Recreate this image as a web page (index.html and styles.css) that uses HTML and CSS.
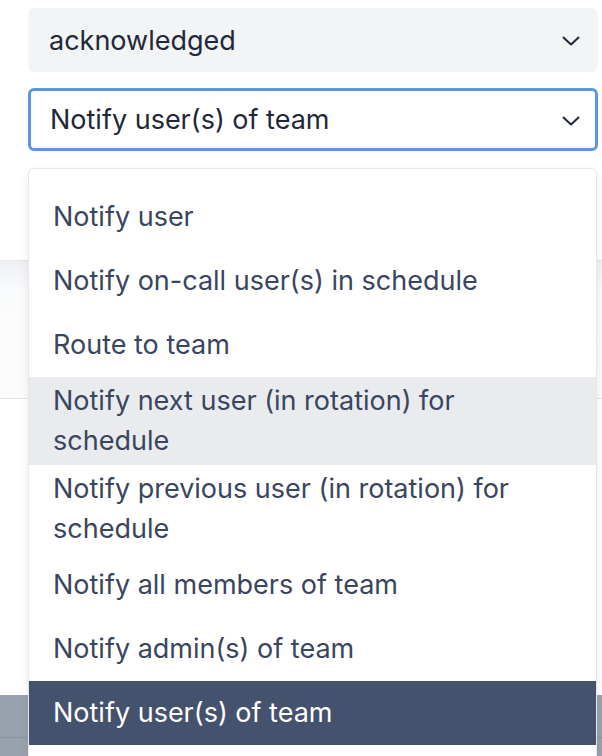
FILE: index.html
```html
<!DOCTYPE html>
<html lang="en">
<head>
  <meta charset="UTF-8">
  <meta name="viewport" content="width=device-width, initial-scale=1.0">
  <title>Escalation step</title>
  <link rel="stylesheet" href="styles.css">
</head>
<body>
  <!-- page behind the open menu -->
  <div class="page">
    <div class="page-top"></div>
    <div class="page-row"></div>
    <div class="page-body"></div>
    <div class="page-footer">
      <div class="footer-line"></div>
    </div>
  </div>

  <div class="form">
    <div class="select select-muted">
      <span>acknowledged</span>
      <svg class="chevron" width="18" height="10" viewBox="0 0 18 10"><path d="M1.5 1.5 L9 8.5 L16.5 1.5" fill="none" stroke="#1f2937" stroke-width="2" stroke-linecap="round" stroke-linejoin="round"/></svg>
    </div>
    <div class="select select-focus">
      <span>Notify user(s) of team</span>
      <svg class="chevron" width="18" height="10" viewBox="0 0 18 10"><path d="M1.5 1.5 L9 8.5 L16.5 1.5" fill="none" stroke="#1f2937" stroke-width="2" stroke-linecap="round" stroke-linejoin="round"/></svg>
    </div>

    <ul class="menu">
      <li class="option">Notify user</li>
      <li class="option">Notify on-call user(s) in schedule</li>
      <li class="option">Route to team</li>
      <li class="option option-hover">Notify next user (in rotation) for schedule</li>
      <li class="option">Notify previous user (in rotation) for schedule</li>
      <li class="option">Notify all members of team</li>
      <li class="option">Notify admin(s) of team</li>
      <li class="option option-selected">Notify user(s) of team</li>
    </ul>
  </div>
</body>
</html>
```

FILE: styles.css
```css
body {
  margin: 0;
  font-family: Inter, "Noto Sans", sans-serif;
  background: #fff;
  overflow: hidden;
  height: 756px;
}

.page {
  display: flex;
  flex-direction: column;
  height: 756px;
}

.page-top {
  height: 260px;
  background: #fff;
}

.page-row {
  height: 137px;
  border-top: 1px solid #e2e4e8;
  border-bottom: 1px solid #e2e4e8;
  background: linear-gradient(to bottom, #eef0f3, #fafbfc 30px, #fcfcfd);
}

.page-body {
  height: 296px;
  background: #fff;
}

.page-footer {
  flex: 1;
  background: #9aa1ae;
  padding-top: 42px;
}

.footer-line {
  height: 1px;
  background: #8c93a1;
}

.form {
  position: absolute;
  top: 8px;
  left: 28px;
  width: 570px;
  display: flex;
  flex-direction: column;
  gap: 16px;
}

.select {
  display: flex;
  align-items: center;
  justify-content: space-between;
  height: 64px;
  box-sizing: border-box;
  padding: 0 18px 0 21px;
  border-radius: 6px;
  font-size: 27px;
  color: #1f2937;
}

.select-muted {
  background: #f3f4f6;
}

.select-focus {
  background: #fff;
  border: 3px solid #5b95e6;
  padding-left: 19px;
  padding-right: 15px;
  height: 63px;
}

.chevron {
  margin-top: 2px;
}

.menu {
  list-style: none;
  margin: 1px 0 0;
  padding: 16px 0 0;
  box-sizing: border-box;
  width: 569px;
  height: 588px;
  overflow: hidden;
  background: #fff;
  border: 1px solid #e5e7eb;
  border-bottom: none;
  border-radius: 6px 6px 0 0;
  box-shadow: 0 4px 10px rgba(17, 24, 39, 0.08);
}

.option {
  display: flex;
  align-items: center;
  min-height: 64px;
  box-sizing: border-box;
  padding: 4px 24px;
  font-size: 27px;
  line-height: 40px;
  color: #3a455e;
}

.option-hover {
  background: #e9ebef;
}

.option-selected {
  background: #44526d;
  color: #fff;
}
```
